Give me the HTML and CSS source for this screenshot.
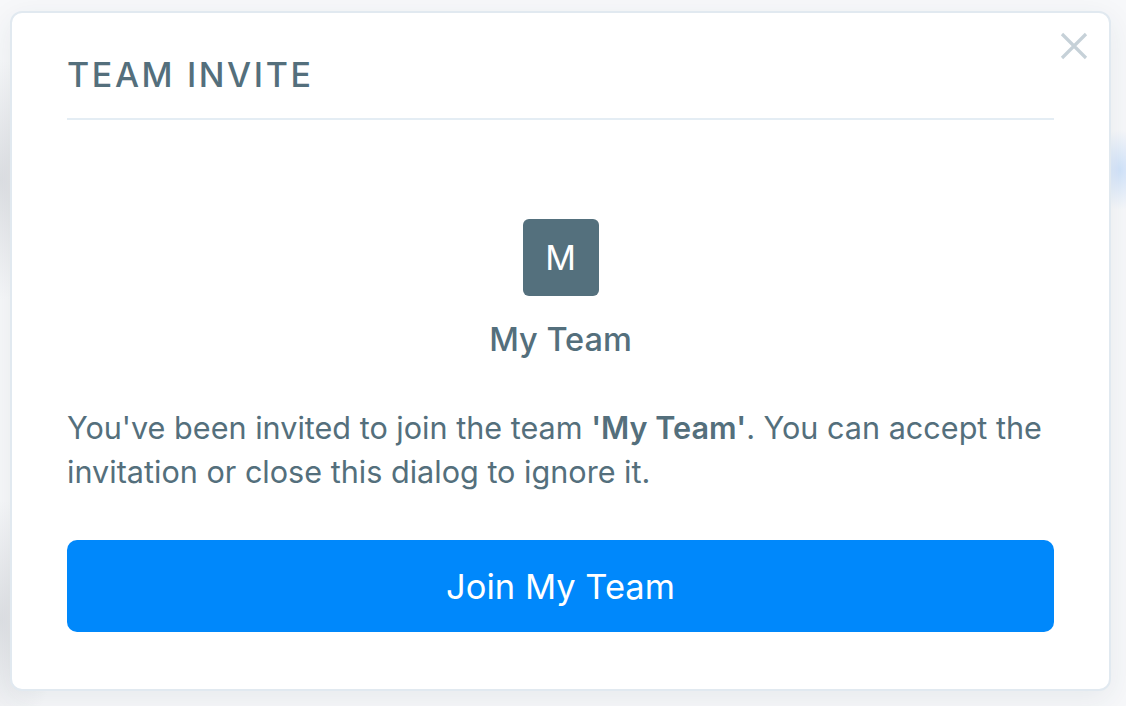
FILE: index.html
```html
<!DOCTYPE html>
<html lang="en">
<head>
<meta charset="utf-8">
<title>Team Invite</title>
<link rel="stylesheet" href="styles.css">
</head>
<body>
<div class="backdrop">
  <div class="dialog">
    <button class="close" aria-label="Close">
      <svg width="28" height="28" viewBox="0 0 28 28"><path d="M2 2 L26 26 M26 2 L2 26" stroke="#c6d1d8" stroke-width="3.2" stroke-linecap="butt" fill="none"/></svg>
    </button>
    <div class="header">
      <h2 class="title">TEAM INVITE</h2>
    </div>
    <div class="team">
      <div class="avatar">M</div>
      <div class="team-name">My Team</div>
    </div>
    <p class="message">You've been invited to join the team <strong>'My Team'</strong>. You can accept the invitation or close this dialog to ignore it.</p>
    <button class="join">Join My Team</button>
  </div>
</div>
</body>
</html>
```

FILE: styles.css
```css
* { box-sizing: border-box; }
html, body { margin: 0; padding: 0; }
body {
  width: 1126px;
  height: 706px;
  overflow: hidden;
  background: #f4f6f8;
  font-family: Inter, "Noto Sans", sans-serif;
}
.backdrop {
  width: 100%;
  height: 100%;
  padding: 11px 15px 16px 10px;
  background:
    radial-gradient(ellipse 30px 40px at 1120px 170px, rgba(200,222,250,0.8), rgba(200,222,250,0) 100%),
    radial-gradient(ellipse 60px 120px at 0px 180px, rgba(220,222,226,0.9), rgba(240,242,244,0) 100%),
    radial-gradient(ellipse 60px 120px at 0px 620px, rgba(220,222,226,0.9), rgba(240,242,244,0) 100%),
    #f7f8fa;
}
.dialog {
  position: relative;
  width: 1101px;
  height: 680px;
  background: #fff;
  border: 2px solid #e1e9f0;
  border-radius: 12px;
  padding: 0 55px;
  display: flex;
  flex-direction: column;
  box-shadow: 0 8px 30px rgba(40,60,80,0.08);
}
.close {
  position: absolute;
  top: 19px;
  right: 21px;
  width: 28px;
  height: 28px;
  padding: 0;
  border: 0;
  background: none;
  display: flex;
}
.header {
  border-bottom: 2px solid #e4edf4;
  padding-top: 40px;
  height: 107px;
}
.title {
  margin: 0;
  font-size: 34px;
  font-weight: 500;
  line-height: 44px;
  letter-spacing: 2.6px;
  color: #546f7c;
}
.team {
  display: flex;
  flex-direction: column;
  align-items: center;
  margin-top: 99px;
}
.avatar {
  width: 76px;
  height: 77px;
  border-radius: 6px;
  background: #54707d;
  color: #fff;
  font-size: 34px;
  display: flex;
  align-items: center;
  justify-content: center;
}
.team-name {
  margin-top: 22px;
  font-size: 32.5px;
  font-weight: 500;
  line-height: 44px;
  color: #546f7c;
}
.message {
  margin: 44px 0 0;
  font-size: 30.6px;
  line-height: 44px;
  color: #546f7c;
}
.message strong { font-weight: 600; }
.join {
  margin-top: 46px;
  height: 92px;
  width: 100%;
  border: 0;
  border-radius: 10px;
  background: #0088fb;
  color: #fff;
  font-family: Inter, "Noto Sans", sans-serif;
  font-size: 34.5px;
  font-weight: 400;
}
```
